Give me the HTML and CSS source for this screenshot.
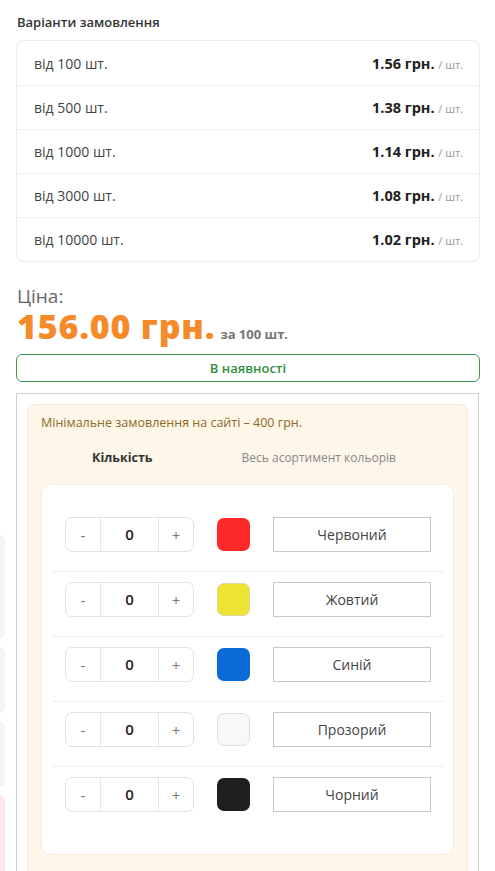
FILE: index.html
```html
<!DOCTYPE html>
<html lang="uk">
<head>
    <meta charset="UTF-8">
    <meta name="viewport" content="width=device-width, initial-scale=1.0">
    <title>Варіанти замовлення</title>
    <link rel="stylesheet" href="styles.css">
</head>
<body>
    <div class="side-tabs">
        <span class="side-tab"></span>
        <span class="side-tab short"></span>
        <span class="side-tab mid"></span>
        <span class="side-tab pink"></span>
    </div>

    <div class="page">
        <h3 class="variants-title">Варіанти замовлення</h3>
        <div class="variants">
            <div class="variant"><span>від 100 шт.</span><span><b>1.56 грн.</b> <small>/ шт.</small></span></div>
            <div class="variant"><span>від 500 шт.</span><span><b>1.38 грн.</b> <small>/ шт.</small></span></div>
            <div class="variant"><span>від 1000 шт.</span><span><b>1.14 грн.</b> <small>/ шт.</small></span></div>
            <div class="variant"><span>від 3000 шт.</span><span><b>1.08 грн.</b> <small>/ шт.</small></span></div>
            <div class="variant"><span>від 10000 шт.</span><span><b>1.02 грн.</b> <small>/ шт.</small></span></div>
        </div>

        <div class="price-label">Ціна:</div>
        <div class="price"><span class="price-value">156.00 грн.</span> <span class="price-note">за 100 шт.</span></div>
        <div class="stock">В наявності</div>

        <div class="order-box">
            <div class="order-inner">
                <p class="min-order">Мінімальне замовлення на сайті – 400 грн.</p>
                <div class="tabs">
                    <span class="tab active">Кількість</span>
                    <span class="tab">Весь асортимент кольорів</span>
                </div>
                <div class="colors">
                    <div class="color-row">
                        <div class="counter"><button>-</button><span class="count">0</span><button>+</button></div>
                        <span class="swatch red"></span>
                        <span class="color-name">Червоний</span>
                    </div>
                    <div class="color-row">
                        <div class="counter"><button>-</button><span class="count">0</span><button>+</button></div>
                        <span class="swatch yellow"></span>
                        <span class="color-name">Жовтий</span>
                    </div>
                    <div class="color-row">
                        <div class="counter"><button>-</button><span class="count">0</span><button>+</button></div>
                        <span class="swatch blue"></span>
                        <span class="color-name">Синій</span>
                    </div>
                    <div class="color-row">
                        <div class="counter"><button>-</button><span class="count">0</span><button>+</button></div>
                        <span class="swatch clear"></span>
                        <span class="color-name">Прозорий</span>
                    </div>
                    <div class="color-row">
                        <div class="counter"><button>-</button><span class="count">0</span><button>+</button></div>
                        <span class="swatch black"></span>
                        <span class="color-name">Чорний</span>
                    </div>
                </div>
            </div>
        </div>
    </div>
</body>
</html>
```

FILE: styles.css
```css
body {
    font-family: "Open Sans", "Liberation Sans", sans-serif;
    margin: 0;
    padding: 0;
    background-color: #fff;
    color: #333;
}
.page {
    padding: 0 15px 0 16px;
}
.variants-title {
    margin: 0;
    padding-top: 13px;
    font-size: 13px;
    font-weight: 600;
    line-height: 18px;
    color: #333;
    padding-left: 1px;
}
.variants {
    margin-top: 9px;
    border: 1px solid #ebebeb;
    border-radius: 8px;
}
.variant {
    display: flex;
    justify-content: space-between;
    align-items: center;
    height: 44px;
    box-sizing: border-box;
    padding: 0 16px 0 17px;
    border-top: 1px solid #efefef;
    font-size: 14px;
    color: #444;
}
.variant:first-child {
    border-top: none;
}
.variant b {
    font-size: 14.5px;
    color: #222;
}
.variant small {
    font-size: 11px;
    color: #999;
}
.price-label {
    margin-top: 23px;
    padding-left: 1px;
    font-size: 19px;
    line-height: 22px;
    color: #666;
}
.price {
    display: flex;
    align-items: baseline;
    gap: 5px;
    height: 38px;
    line-height: 38px;
    padding-left: 1px;
}
.price-value {
    font-size: 34px;
    font-weight: 800;
    letter-spacing: 0.8px;
    color: #f58a2b;
}
.price-note {
    font-size: 13px;
    line-height: 1;
    font-weight: 700;
    color: #777;
}
.stock {
    margin-top: 9px;
    height: 26px;
    line-height: 26px;
    border: 1px solid #3f9b4c;
    border-radius: 6px;
    text-align: center;
    font-size: 13px;
    font-weight: 600;
    color: #2f8f3f;
}
.order-box {
    margin-top: 11px;
    margin-right: 1px;
    border: 1px solid #cfcfcf;
    border-bottom: none;
    padding: 10px 10px 0;
    height: 480px;
}
.order-inner {
    background-color: #fef6e9;
    border: 1px solid #fbe9d3;
    border-radius: 8px;
    padding: 0 13px 30px;
}
.min-order {
    margin: 0;
    padding-top: 9px;
    font-size: 12.5px;
    line-height: 18px;
    color: #8a6a28;
}
.tabs {
    display: flex;
    gap: 89px;
    padding: 17px 0 0 51px;
    font-size: 12px;
    line-height: 18px;
}
.tab {
    color: #888;
}
.tab.active {
    font-weight: 700;
    font-size: 12.5px;
    color: #333;
}
.colors {
    margin-top: 17px;
    background-color: #fff;
    border: 1px solid #f5ece0;
    border-radius: 10px;
    padding: 22px 10px;
}
.color-row {
    display: flex;
    align-items: center;
    padding: 10px 0 19px 13px;
    border-top: 1px solid #eeeeee;
}
.color-row:first-child {
    border-top: none;
}
.color-row:last-child {
    padding-bottom: 20px;
}
.counter {
    display: flex;
    width: 129px;
    height: 35px;
    border: 1px solid #e2e2e2;
    border-radius: 7px;
    box-sizing: border-box;
}
.counter button {
    width: 34px;
    border: none;
    background: none;
    font-family: inherit;
    font-size: 15px;
    color: #777;
    padding: 0;
}
.count {
    flex: 1;
    border-left: 1px solid #e6e6e6;
    border-right: 1px solid #e6e6e6;
    text-align: center;
    line-height: 33px;
    font-size: 15px;
    font-weight: 600;
    color: #222;
}
.swatch {
    width: 33px;
    height: 33px;
    margin-left: 23px;
    border-radius: 7px;
    box-sizing: border-box;
}
.swatch.red { background-color: #fe2a2a; }
.swatch.yellow { background-color: #ece333; border: 1px solid #ddd6a0; }
.swatch.blue { background-color: #0a6bd8; }
.swatch.clear { background-color: #f8f8fb; border: 1px solid #dedede; }
.swatch.black { background-color: #1f1f1f; }
.color-name {
    margin-left: 23px;
    width: 158px;
    height: 35px;
    line-height: 33px;
    box-sizing: border-box;
    border: 1px solid #c9c9c9;
    text-align: center;
    font-size: 14px;
    color: #444;
}
.side-tabs {
    position: absolute;
    left: -12px;
    top: 535px;
    width: 17px;
}
.side-tab {
    display: block;
    height: 104px;
    margin-bottom: 8px;
    background-color: #f4f4f4;
    border-radius: 6px;
}
.side-tab.short { height: 66px; }
.side-tab.mid { height: 66px; }
.side-tab.pink {
    height: 90px;
    background-color: #fde7e9;
}
```
